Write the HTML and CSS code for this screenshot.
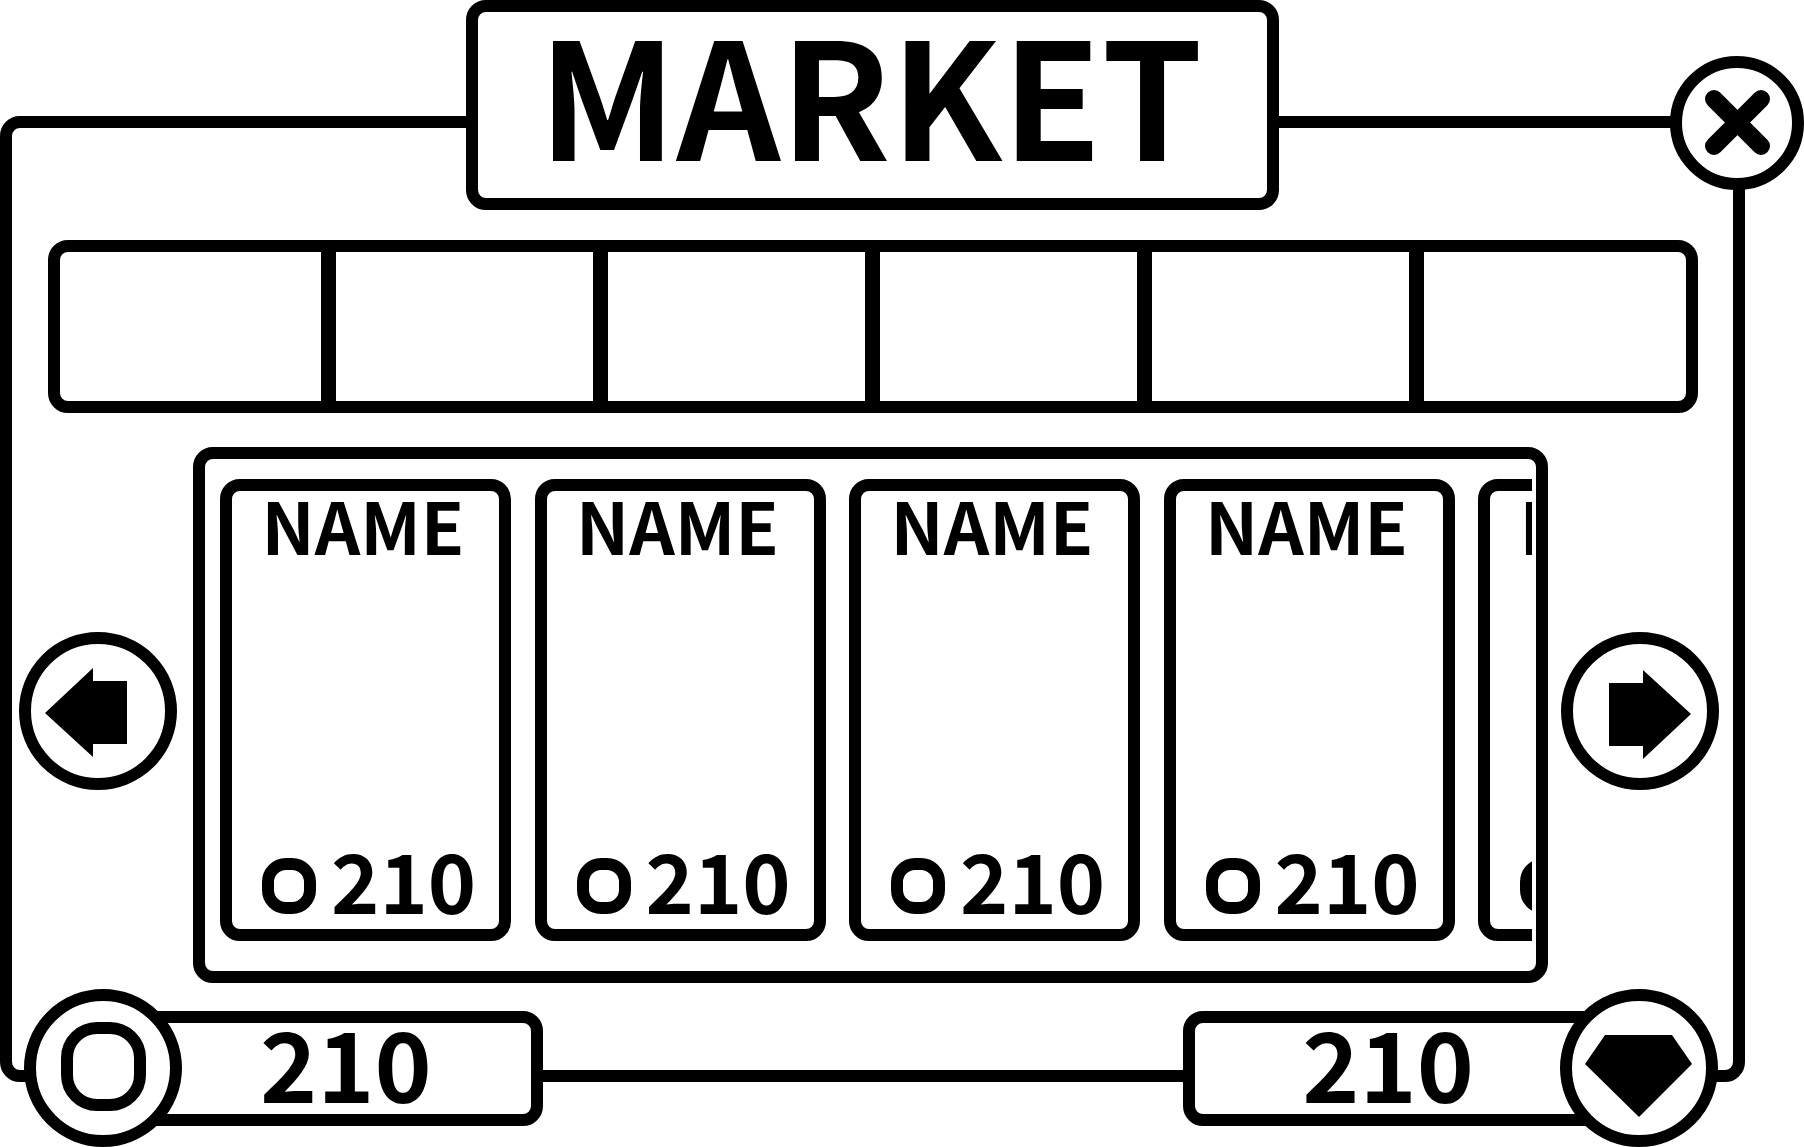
FILE: index.html
```html
<!DOCTYPE html>
<html lang="en">
<head>
<meta charset="utf-8">
<title>Market</title>
<link rel="stylesheet" href="styles.css">
</head>
<body>
<svg class="defs" aria-hidden="true">
  <symbol id="coin" viewBox="0 0 54 56"><rect x="6" y="6" width="42" height="44" rx="18" fill="none" stroke="#000" stroke-width="12"/></symbol>
</svg>
<main class="panel">
  <h1 class="title">MARKET</h1>
  <button class="round close" aria-label="Close">
    <svg viewBox="0 0 110 110" width="110" height="110"><path d="M32 31l47 47M79 31L32 78" fill="none" stroke="#000" stroke-width="18" stroke-linecap="round"/></svg>
  </button>

  <nav class="tabs" aria-label="Categories">
    <button class="tab" aria-label="Category 1"></button>
    <button class="tab" aria-label="Category 2"></button>
    <button class="tab" aria-label="Category 3"></button>
    <button class="tab" aria-label="Category 4"></button>
    <button class="tab" aria-label="Category 5"></button>
    <button class="tab" aria-label="Category 6"></button>
  </nav>

  <section class="stage">
    <button class="round arrow" aria-label="Previous">
      <svg viewBox="0 0 134 134" width="134" height="134"><path d="M14 69L62 24V37H96V100H62V113Z"/></svg>
    </button>
    <div class="shelf">
      <div class="track">
        <article class="card"><h2 class="name">NAME</h2><p class="price"><svg class="coin"><use href="#coin"/></svg>210</p></article>
        <article class="card"><h2 class="name">NAME</h2><p class="price"><svg class="coin"><use href="#coin"/></svg>210</p></article>
        <article class="card"><h2 class="name">NAME</h2><p class="price"><svg class="coin"><use href="#coin"/></svg>210</p></article>
        <article class="card"><h2 class="name">NAME</h2><p class="price"><svg class="coin"><use href="#coin"/></svg>210</p></article>
        <article class="card"><h2 class="name">NAME</h2><p class="price"><svg class="coin"><use href="#coin"/></svg>210</p></article>
      </div>
    </div>
    <button class="round arrow" aria-label="Next">
      <svg viewBox="0 0 134 134" width="134" height="134"><path d="M118 70L70 26V39H36V102H70V115Z"/></svg>
    </button>
  </section>

  <footer class="wallets">
    <div class="wallet">
      <span class="round badge"><svg viewBox="0 0 134 134" width="134" height="134"><rect x="31" y="27" width="73" height="77" rx="30" fill="none" stroke="#000" stroke-width="12"/></svg></span>
      <span class="amount coins">210</span>
    </div>
    <div class="wallet">
      <span class="amount gems">210</span>
      <span class="round badge"><svg viewBox="0 0 134 134" width="134" height="134"><path d="M33 34H100L120 63L67 116L13 63Z"/></svg></span>
    </div>
  </footer>
</main>
</body>
</html>
```
FILE: styles.css
```css
* {
  box-sizing: border-box;
}

body {
  margin: 0;
  background: #fff;
  color: #000;
  font-family: "Noto Sans CJK SC", "Noto Sans", sans-serif;
  font-weight: 700;
}

.defs {
  position: absolute;
  width: 0;
  height: 0;
}

button {
  padding: 0;
  border: 0;
  background: #fff;
  cursor: pointer;
}

.panel {
  position: relative;
  display: flex;
  flex-direction: column;
  margin: 116px 59px 65px 0;
  border: 12px solid #000;
  border-radius: 20px;
}

.title {
  align-self: center;
  width: calc(100% - 908px);
  min-width: 700px;
  margin: -128px 0 30px;
  padding-right: 4px;
  padding-bottom: 28px;
  border: 12px solid #000;
  border-radius: 20px;
  background: #fff;
  font-size: 162px;
  line-height: 158px;
  text-align: center;
}

.round {
  display: flex;
  flex: none;
  align-items: center;
  justify-content: center;
  width: 158px;
  height: 158px;
  border: 12px solid #000;
  border-radius: 50%;
  background: #fff;
}

.close {
  position: absolute;
  top: -72px;
  right: -71px;
  width: 134px;
  height: 134px;
}

.tabs {
  display: grid;
  grid-template-columns: 261fr repeat(4, 257fr) 262fr;
  gap: 15px;
  margin: 0 35px 34px 36px;
  border: 12px solid #000;
  border-radius: 20px;
  background: #000;
}

.tab {
  height: 149px;
}

.tab:first-child {
  border-radius: 8px 0 0 8px;
}

.tab:last-child {
  border-radius: 0 8px 8px 0;
}

.stage {
  display: flex;
  align-items: center;
  padding: 0 14px 0 7px;
}

.arrow {
  margin-bottom: 8px;
}

.shelf {
  flex: 1;
  min-width: 0;
  margin: 0 13px 0 16px;
  padding: 20px 4px 30px 15px;
  border: 12px solid #000;
  border-radius: 20px;
}

.track {
  display: grid;
  grid-template-columns: repeat(4, minmax(0, 1fr)) 54px;
  gap: 24px;
  overflow: hidden;
}

.card {
  display: flex;
  flex-direction: column;
  justify-content: space-between;
  min-width: 291px;
  min-height: 462px;
  padding-bottom: 9px;
  border: 12px solid #000;
  border-radius: 20px;
}

.name {
  margin: 0;
  padding-right: 5px;
  font-size: 71px;
  line-height: 66px;
  text-align: center;
}

.price {
  display: flex;
  align-items: baseline;
  gap: 15px;
  margin: 0;
  padding-left: 30px;
  font-size: 82px;
  line-height: 82px;
}

.coin {
  flex: none;
  width: 54px;
  height: 56px;
  margin-bottom: 2px;
}

.wallets {
  display: flex;
  justify-content: space-between;
  margin: 6px 15px -77px 12px;
}

.wallet {
  display: flex;
  align-items: center;
}

.badge {
  position: relative;
}

.amount {
  padding-bottom: 16px;
  border: 12px solid #000;
  border-radius: 20px;
  background: #fff;
  font-size: 97px;
  line-height: 75px;
}

.coins {
  margin-left: -79px;
  padding-left: 145px;
  padding-right: 99px;
}

.gems {
  margin-right: -79px;
  padding-left: 107px;
  padding-right: 153px;
}
```
